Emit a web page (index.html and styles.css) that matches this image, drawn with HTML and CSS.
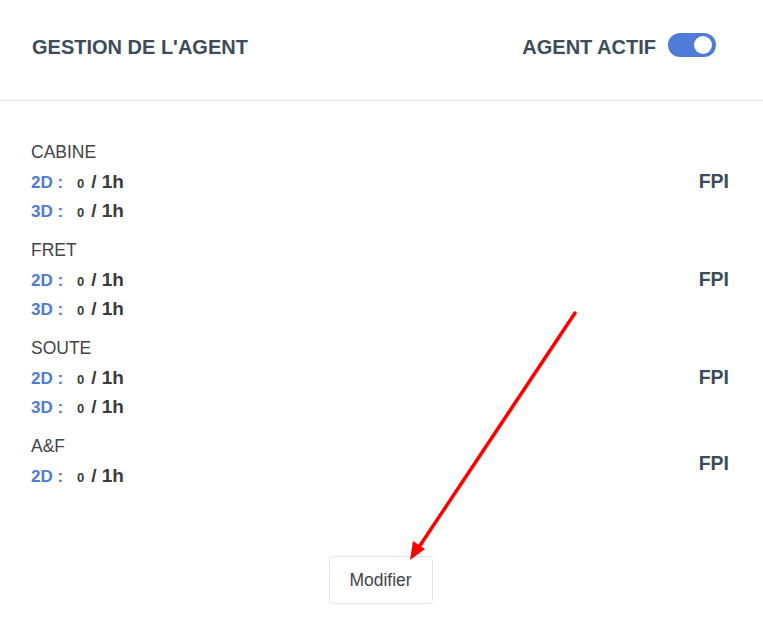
FILE: index.html
```html
<!DOCTYPE html>
<html lang="fr">
<head>
<meta charset="utf-8">
<link rel="stylesheet" href="styles.css">
</head>
<body>
<div class="panel">
  <header class="header">
    <h1 class="title">GESTION DE L'AGENT</h1>
    <div class="status">
      <span class="status-label">AGENT ACTIF</span>
      <span class="toggle"><span class="knob"></span></span>
    </div>
  </header>
  <main class="content">
    <section class="section">
      <div class="info">
        <div class="label">CABINE</div>
        <div class="row"><span class="dim">2D :</span><span class="zero">0</span><span class="total">/ 1h</span></div>
        <div class="row"><span class="dim">3D :</span><span class="zero">0</span><span class="total">/ 1h</span></div>
      </div>
      <div class="fpi">FPI</div>
    </section>
    <section class="section">
      <div class="info">
        <div class="label">FRET</div>
        <div class="row"><span class="dim">2D :</span><span class="zero">0</span><span class="total">/ 1h</span></div>
        <div class="row"><span class="dim">3D :</span><span class="zero">0</span><span class="total">/ 1h</span></div>
      </div>
      <div class="fpi">FPI</div>
    </section>
    <section class="section">
      <div class="info">
        <div class="label">SOUTE</div>
        <div class="row"><span class="dim">2D :</span><span class="zero">0</span><span class="total">/ 1h</span></div>
        <div class="row"><span class="dim">3D :</span><span class="zero">0</span><span class="total">/ 1h</span></div>
      </div>
      <div class="fpi">FPI</div>
    </section>
    <section class="section">
      <div class="info">
        <div class="label">A&amp;F</div>
        <div class="row"><span class="dim">2D :</span><span class="zero">0</span><span class="total">/ 1h</span></div>
      </div>
      <div class="fpi fpi-single">FPI</div>
    </section>
    <div class="actions">
      <button class="btn" type="button">Modifier</button>
    </div>
  </main>
  <svg class="arrow" width="763" height="633" viewBox="0 0 763 633">
    <line x1="575" y1="313" x2="419" y2="547" stroke="#ff0000" stroke-width="3.5" stroke-linecap="round"/>
    <polygon points="410,560 413,541 425,549" fill="#ff0000"/>
  </svg>
</div>
</body>
</html>
```
FILE: styles.css
```css
html, body {
  margin: 0;
  padding: 0;
  background: #ffffff;
}
body {
  font-family: "Liberation Sans", Arial, sans-serif;
  color: #444;
}
.panel {
  position: relative;
  width: 763px;
  height: 633px;
}
.header {
  height: 94px;
  padding: 0 47px 6px 32px;
  display: flex;
  align-items: center;
  justify-content: space-between;
  border-bottom: 1px solid #e6e6e6;
}
.title {
  margin: 0;
  font-size: 20px;
  font-weight: bold;
  color: #3c4c5b;
}
.status {
  display: flex;
  align-items: center;
  gap: 12px;
}
.status-label {
  font-size: 20px;
  font-weight: bold;
  color: #3c4c5b;
}
.toggle {
  position: relative;
  display: inline-block;
  width: 48px;
  height: 24px;
  border-radius: 12px;
  background: #4f7cd9;
  margin-top: -4px;
}
.knob {
  position: absolute;
  top: 3px;
  right: 4px;
  width: 18px;
  height: 18px;
  border-radius: 50%;
  background: #fff;
}
.content {
  padding: 37px 34px 0 31px;
}
.section {
  display: flex;
  align-items: center;
  justify-content: space-between;
  margin-bottom: 11px;
}
.label {
  font-size: 17.5px;
  line-height: 29px;
  color: #444;
}
.row {
  line-height: 29px;
  height: 29px;
  display: flex;
  align-items: baseline;
  font-weight: bold;
}
.dim {
  color: #4e7bd8;
  font-size: 17px;
  width: 46px;
}
.zero {
  font-size: 13px;
  color: #3b3b3b;
  margin-right: 7px;
}
.total {
  font-size: 19px;
  color: #3b3b3b;
}
.fpi {
  font-size: 19.5px;
  font-weight: bold;
  color: #3c4c5b;
}
.fpi-single {
  margin-top: 4px;
}
.actions {
  display: flex;
  justify-content: center;
  padding-top: 55px;
  padding-left: 1px;
}
.btn {
  width: 104px;
  height: 48px;
  background: #fff;
  border: 1px solid #e4e4e4;
  border-radius: 4px;
  font-family: "Liberation Sans", Arial, sans-serif;
  font-size: 17.5px;
  color: #444;
}
.arrow {
  position: absolute;
  left: 0;
  top: 0;
  pointer-events: none;
}
```
